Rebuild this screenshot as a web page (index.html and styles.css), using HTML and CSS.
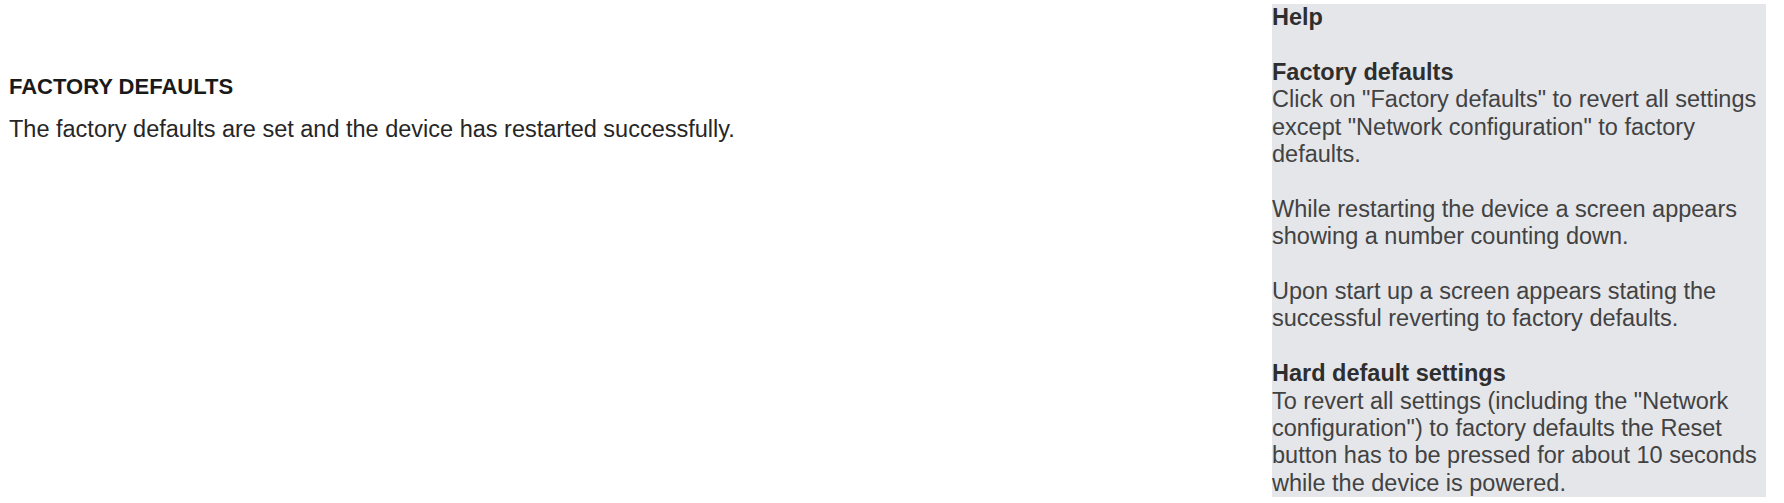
FILE: index.html
```html
<!DOCTYPE html>
<html>

<head>
    <title>Factory defaults</title>
    <link rel="stylesheet" href="styles.css">
</head>

<body>
    <div class="page">
        <div class="content">
            <h2 class="title">FACTORY DEFAULTS</h2>
            <p class="message">The factory defaults are set and the device has restarted successfully.</p>
        </div>

        <div class="help">
            <h3>Help</h3>

            <h4>Factory defaults</h4>
            <p>Click on "Factory defaults" to revert all settings except "Network configuration" to factory defaults.</p>
            <p>While restarting the device a screen appears showing a number counting down.</p>
            <p>Upon start up a screen appears stating the successful reverting to factory defaults.</p>

            <h4>Hard default settings</h4>
            <p>To revert all settings (including the "Network configuration") to factory defaults the Reset button has to be pressed for about 10 seconds while the device is powered.</p>
        </div>
    </div>
</body>

</html>
```

FILE: styles.css
```css
body {
    margin: 0;
    font-family: "Liberation Sans", Arial, sans-serif;
    background-color: #fff;
}

.page {
    display: flex;
    align-items: flex-start;
    padding-top: 4px;
}

.content {
    flex: 1;
    padding-left: 9px;
    padding-top: 69px;
}

.title {
    margin: 0;
    font-size: 22px;
    line-height: 27px;
    font-weight: bold;
    color: #1a1a1a;
}

.message {
    margin: 16px 0 0 0;
    font-size: 23.5px;
    line-height: 27px;
    color: #262626;
}

.help {
    width: 494px;
    margin-right: 18px;
    background-color: #e5e6ea;
    font-size: 23.5px;
    line-height: 27.4px;
    color: #424242;
}

.help h3,
.help h4 {
    margin: 0;
    font-size: 23.5px;
    font-weight: bold;
    color: #2e2e2e;
}

.help h3 {
    margin-bottom: 27.4px;
}

.help p {
    margin: 0 0 27.4px 0;
}

.help p:last-child {
    margin-bottom: 0;
}
```
